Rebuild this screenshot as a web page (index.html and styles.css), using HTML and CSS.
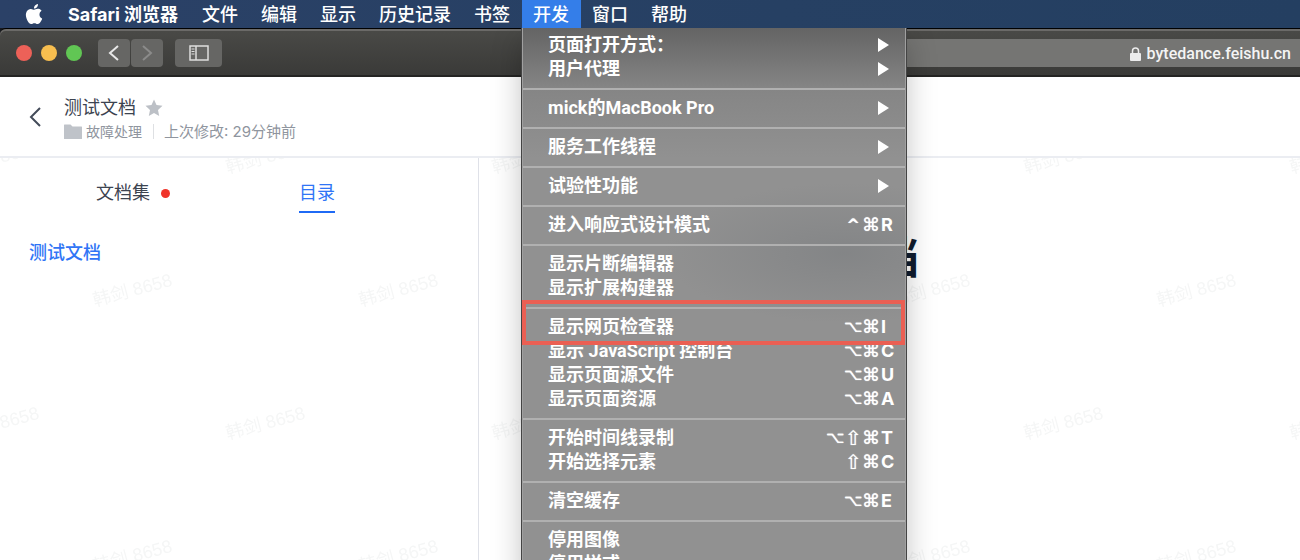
FILE: index.html
```html
<!DOCTYPE html>
<html lang="zh-CN">
<head>
    <meta charset="UTF-8">
    <meta name="viewport" content="width=device-width, initial-scale=1.0">
    <title>测试文档</title>
    <link rel="stylesheet" href="styles.css">
</head>
<body>
    <nav class="menubar">
        <button class="apple" aria-label="Apple">
            <svg width="20" height="20" viewBox="0 0 24 24" fill="#fff"><path d="M12.152 6.896c-.948 0-2.415-1.078-3.96-1.04-2.04.027-3.91 1.183-4.961 3.014-2.117 3.675-.546 9.103 1.519 12.09 1.013 1.454 2.208 3.09 3.792 3.039 1.52-.065 2.09-.987 3.935-.987 1.831 0 2.35.987 3.96.948 1.637-.026 2.676-1.48 3.676-2.948 1.156-1.688 1.636-3.325 1.662-3.415-.039-.013-3.182-1.221-3.22-4.857-.026-3.04 2.48-4.494 2.597-4.559-1.429-2.09-3.623-2.324-4.39-2.376-2-.156-3.675 1.09-4.61 1.09zM15.53 3.83c.843-1.012 1.4-2.427 1.245-3.83-1.207.052-2.662.805-3.532 1.818-.78.896-1.454 2.338-1.273 3.714 1.338.104 2.715-.688 3.559-1.701"/></svg>
        </button>
        <button class="app-name">Safari 浏览器</button>
        <button>文件</button>
        <button>编辑</button>
        <button>显示</button>
        <button>历史记录</button>
        <button>书签</button>
        <div class="open">
            <button class="active">开发</button>
            <div class="menu">
                <ul>
                    <li><button>页面打开方式：<i class="arrow"></i></button></li>
                    <li><button>用户代理<i class="arrow"></i></button></li>
                </ul>
                <ul>
                    <li><button>mick的MacBook Pro<i class="arrow"></i></button></li>
                </ul>
                <ul>
                    <li><button>服务工作线程<i class="arrow"></i></button></li>
                </ul>
                <ul>
                    <li><button>试验性功能<i class="arrow"></i></button></li>
                </ul>
                <ul>
                    <li><button>进入响应式设计模式<kbd><span class="ctrl">^</span><span>⌘</span><b>R</b></kbd></button></li>
                </ul>
                <ul>
                    <li><button>显示片断编辑器</button></li>
                    <li><button>显示扩展构建器</button></li>
                </ul>
                <ul>
                    <li class="marked"><button>显示网页检查器<kbd><span class="alt">⌥</span><span>⌘</span><b>I</b></kbd></button></li>
                    <li><button>显示 JavaScript 控制台<kbd><span class="alt">⌥</span><span>⌘</span><b>C</b></kbd></button></li>
                    <li><button>显示页面源文件<kbd><span class="alt">⌥</span><span>⌘</span><b>U</b></kbd></button></li>
                    <li><button>显示页面资源<kbd><span class="alt">⌥</span><span>⌘</span><b>A</b></kbd></button></li>
                </ul>
                <ul>
                    <li><button>开始时间线录制<kbd><span class="alt">⌥</span><span class="shift">⇧</span><span>⌘</span><b>T</b></kbd></button></li>
                    <li><button>开始选择元素<kbd><span class="shift">⇧</span><span>⌘</span><b>C</b></kbd></button></li>
                </ul>
                <ul>
                    <li><button>清空缓存<kbd><span class="alt">⌥</span><span>⌘</span><b>E</b></kbd></button></li>
                </ul>
                <ul>
                    <li><button>停用图像</button></li>
                    <li><button>停用样式</button></li>
                </ul>
            </div>
        </div>
        <button>窗口</button>
        <button>帮助</button>
    </nav>

    <div class="toolbar">
        <div class="lights">
            <span class="red"></span>
            <span class="yellow"></span>
            <span class="green"></span>
        </div>
        <div class="history">
            <button aria-label="后退"><svg width="32" height="28" viewBox="0 0 32 28" fill="none" stroke="#e8e8e8" stroke-width="2"><path d="M20 7l-8 7 8 7"/></svg></button>
            <button aria-label="前进"><svg width="32" height="28" viewBox="0 0 32 28" fill="none" stroke="#8b8b8a" stroke-width="2"><path d="M12 7l8 7-8 7"/></svg></button>
        </div>
        <button class="panel" aria-label="边栏">
            <svg width="20" height="16" viewBox="0 0 20 16" fill="none" stroke="#dededd">
                <rect x="1" y="1" width="18" height="14" stroke-width="1.5"/>
                <path d="M7 1v14" stroke-width="1.5"/>
                <path d="M2.500 4h3M2.500 6.500h3M2.500 9h3"/>
            </svg>
        </button>
        <div class="address">
            <svg width="11" height="14" viewBox="0 0 11 14"><path d="M2.500 7V4a3 3 0 0 1 6 0v3" fill="none" stroke="#ececec" stroke-width="1.500"/><rect y="6" width="11" height="8" rx="1" fill="#ececec"/></svg>
            <span>bytedance.feishu.cn</span>
        </div>
    </div>

    <header class="doc-header">
        <a class="back" href="#" aria-label="返回"><svg width="12" height="20" viewBox="0 0 12 20" fill="none" stroke="#434b59" stroke-width="2"><path d="M11 1L2 10l9 9"/></svg></a>
        <div class="doc-info">
            <div class="doc-name">
                <span>测试文档</span>
                <button aria-label="收藏"><svg width="18" height="18" viewBox="0 0 18 18" fill="#bcc0c6"><path d="M9 .5l2.500 5.600 6 .7-4.500 4.100 1.200 6.100L9 14l-5.200 3 1.200-6.100L.5 6.800l6-.7z"/></svg></button>
            </div>
            <div class="doc-meta">
                <svg width="18" height="15" viewBox="0 0 18 15" fill="#bfc3c9"><path d="M0 1Q0 .5.5.5h6l2 2h9q.5 0 .5.5v11.500q0 .5-.5.5H.5q-.5 0-.5-.5z"/></svg>
                <a href="#">故障处理</a>
                <span class="modified">上次修改: 29分钟前</span>
            </div>
        </div>
    </header>

    <main>
        <aside>
            <div class="tabs">
                <button>文档集<i class="dot"></i></button>
                <button class="current">目录</button>
            </div>
            <a class="toc" href="#title">测试文档</a>
        </aside>
        <article>
            <h1 id="title">测试文档</h1>
        </article>
        <svg class="watermark" width="100%" height="100%">
            <defs>
                <pattern id="wm" width="266" height="266" patternUnits="userSpaceOnUse">
                    <g text-anchor="middle">
                        <text transform="translate(134 138) rotate(-15)">韩剑 8658</text>
                        <text transform="translate(267 271) rotate(-15)">韩剑 8658</text>
                        <text transform="translate(1 271) rotate(-15)">韩剑 8658</text>
                        <text transform="translate(267 5) rotate(-15)">韩剑 8658</text>
                        <text transform="translate(1 5) rotate(-15)">韩剑 8658</text>
                    </g>
                </pattern>
            </defs>
            <rect width="100%" height="100%" fill="url(#wm)"/>
        </svg>
    </main>
</body>
</html>
```
FILE: styles.css
```css
* { box-sizing: border-box; }
body { margin: 0; height: 100vh; overflow: hidden; display: flex; flex-direction: column; background: #16191f; font-family: Inter, "Noto Sans CJK SC", sans-serif; font-size: 18px; line-height: 24px; }
button { padding: 0; border: none; background: none; color: inherit; font: inherit; cursor: default; white-space: nowrap; }
a { text-decoration: none; }
ul { margin: 0; padding: 0; list-style: none; }
svg { display: block; flex: none; }

/* system menu bar */
.menubar { position: relative; z-index: 2; display: flex; height: 28px; padding-left: 13px; background: linear-gradient(90deg, #2b4167, #264063 60%, #243f61); color: #fff; font-weight: 500; }
.menubar > button, .active { height: 28px; padding: 1px 12px 0 11px; }
.menubar .apple { width: 44px; padding-top: 0; }
.menubar .app-name { padding-right: 13px; font-weight: 700; }
.active { background: #347ee9; }
.open { position: relative; }

.menu { position: absolute; top: 28px; left: 0; width: 384px; padding: 5px 0; background: radial-gradient(180px 70px at 84% 225px, rgba(118, 121, 124, 0.5), transparent), linear-gradient(#646464, #858585 60px, #919191 130px); border: 1px solid #a0a0a0; border-width: 0 1px; box-shadow: 0 0 0 1px #444, 0 12px 28px rgba(0, 0, 0, 0.25); clip-path: inset(0 -40px -40px -40px); font-family: Roboto, "Noto Sans CJK SC", sans-serif; font-weight: 700; }
.menu ul + ul { margin-top: 7px; padding-top: 6px; border-top: 2px solid #b0b0b0; }
.menu li button { display: flex; align-items: center; justify-content: space-between; width: 100%; height: 24px; padding: 0 11px 0 25px; }
.menu kbd { display: flex; font: inherit; }
.menu kbd span { width: 18px; text-align: center; font-family: "DejaVu Sans", sans-serif; font-weight: 400; text-shadow: 0 0 1px #fff; }
.menu kbd .alt { font-size: 16px; }
.menu kbd .ctrl { font-size: 16px; font-weight: 700; }
.menu kbd .shift { font-size: 20px; }
.menu kbd b { width: 13px; margin-left: 1px; font-family: Inter, sans-serif; font-weight: 700; text-align: left; }
.arrow { margin-right: 5px; border-left: 11px solid #fff; border-top: 7px solid transparent; border-bottom: 7px solid transparent; }
.marked { position: relative; }
.marked::after { content: ""; position: absolute; inset: -15px 0 -6px -1px; border: 4px solid #ea5f53; }

/* browser toolbar */
.toolbar { display: flex; align-items: center; height: 49px; flex: none; padding: 1px 0 0 16px; background: linear-gradient(#4a4a47, #3a3a38); border-top: 1px solid #000; border-bottom: 2px solid #242423; border-radius: 6px 0 0 0; box-shadow: inset 0 2px #6b6a68; }
.lights { display: flex; gap: 9px; width: 82px; }
.lights span { width: 16px; height: 16px; border-radius: 50%; }
.red { background: #ed6158; }
.yellow { background: #f7be4f; }
.green { background: #61c654; }
.history { display: flex; gap: 1px; margin-right: 12px; }
.toolbar button { height: 28px; border-radius: 4px; background: #666664; }
.toolbar .panel { width: 47px; display: flex; align-items: center; justify-content: center; }
.address { flex: 1; display: flex; align-items: center; justify-content: flex-end; gap: 6px; height: 28px; margin-left: 350px; padding: 2px 9px 0 0; background: #757573; color: #f4f4f4; font-family: Roboto, sans-serif; font-size: 16px; font-weight: 500; }

/* document header */
.doc-header { display: flex; align-items: center; gap: 23px; height: 81px; flex: none; padding-left: 29px; background: #fff; border-bottom: 2px solid #ebedf2; color: #3c4350; }
.doc-info { padding-top: 6px; }
.doc-name { display: flex; align-items: center; gap: 9px; }
.doc-meta { display: flex; align-items: center; color: #8f959e; font-size: 15px; }
.doc-meta a { margin-left: 4px; color: inherit; font-size: 14px; }
.modified { margin-left: 11px; padding-left: 10px; border-left: 1px solid #dee0e3; line-height: 15px; }

main { position: relative; flex: 1; display: flex; min-height: 0; background: #fff; }
aside { width: 479px; flex: none; border-right: 1px solid #dfe1e8; }
.tabs { display: flex; gap: 129px; padding: 23px 0 0 96px; color: #3c4350; }
.tabs button { display: flex; align-items: center; height: 32px; border-bottom: 2px solid transparent; padding-bottom: 6px; }
.dot { width: 9px; height: 9px; margin-left: 11px; border-radius: 50%; background: #f0342a; }
.tabs .current { color: #3075f6; border-color: #1f6af5; }
.toc { display: block; margin-top: 28px; padding-left: 29px; color: #3075f6; font-weight: 500; }
article { flex: 1; padding: 68px 0 0 264px; }
h1 { margin: 0; color: #101c2e; font-size: 44px; line-height: 64px; }
.watermark { position: absolute; top: 0; left: 0; fill: #f5f6f6; font-family: "Liberation Sans", "Noto Sans CJK SC", sans-serif; font-size: 18px; pointer-events: none; }
```
